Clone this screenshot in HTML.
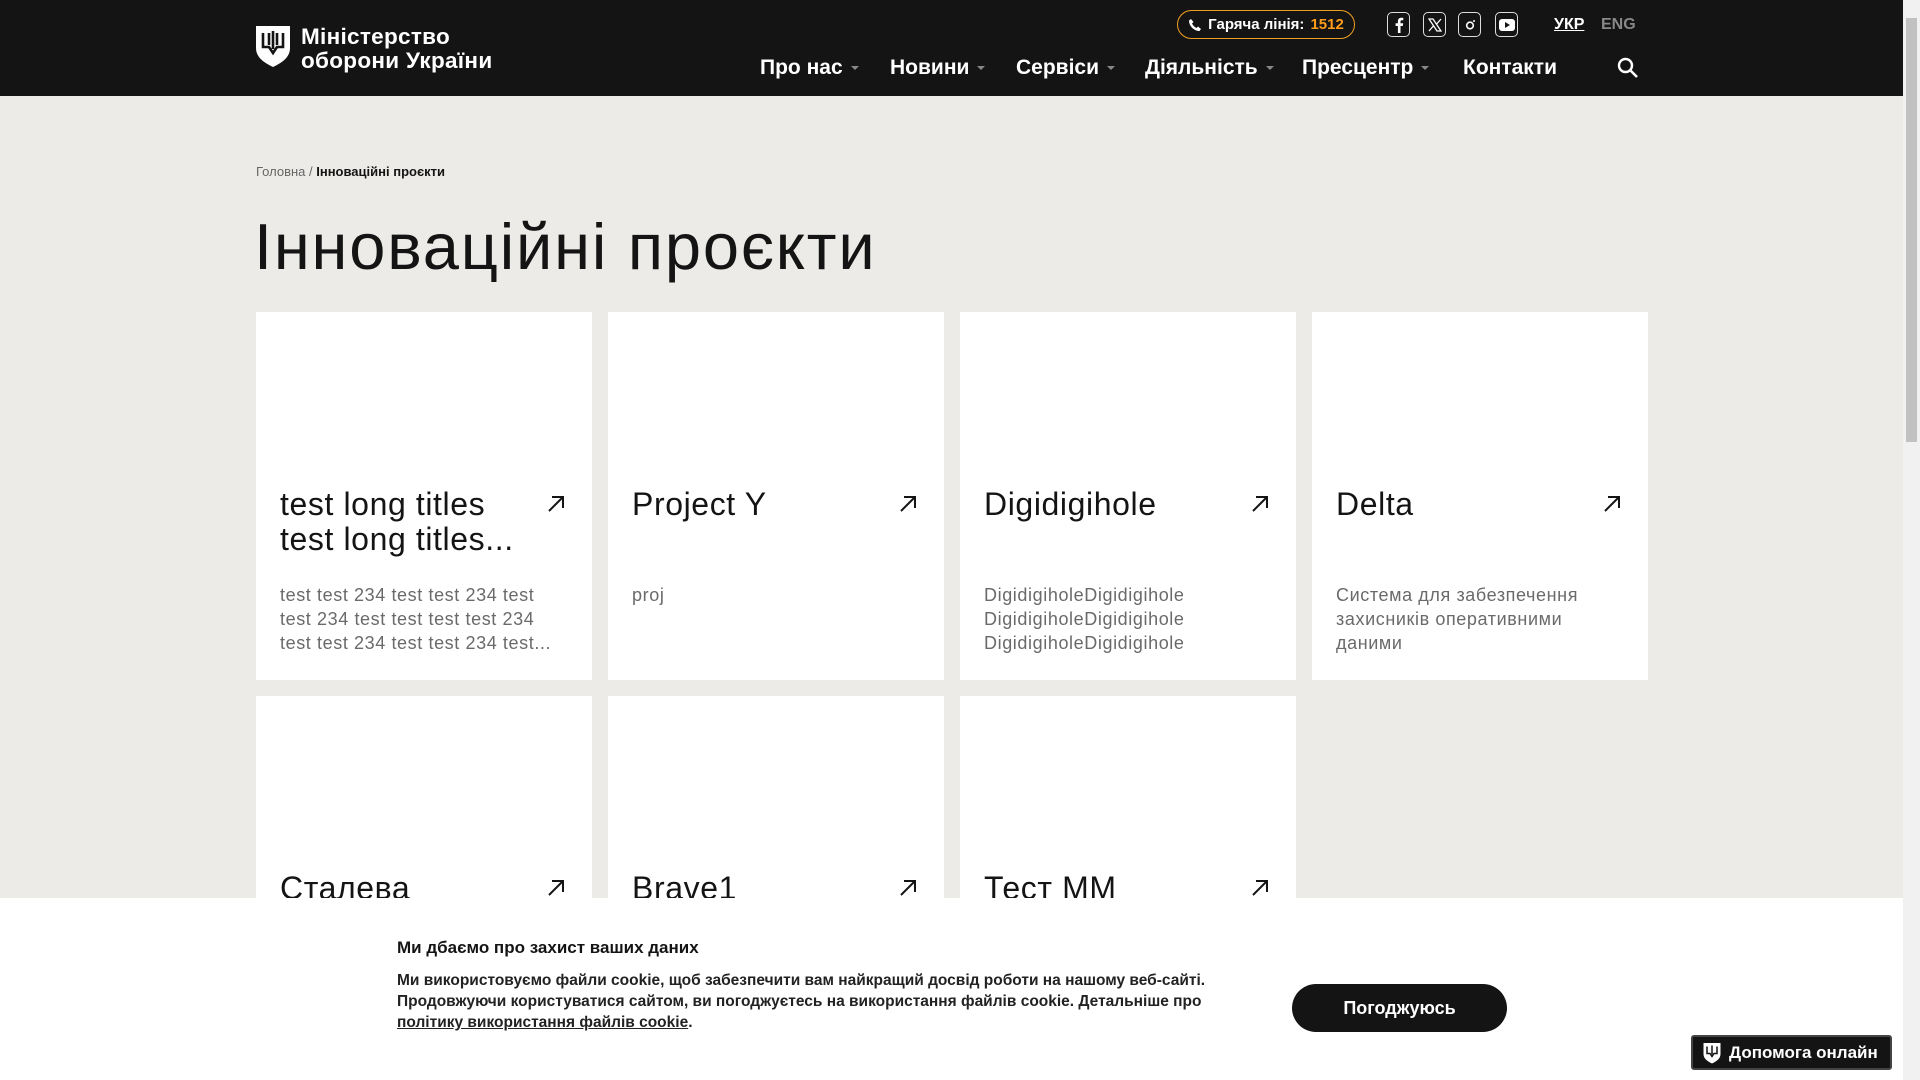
<!DOCTYPE html>
<html><head><meta charset="utf-8">
<style>
*{box-sizing:border-box;margin:0;padding:0}
body{width:1920px;height:1080px;overflow:hidden;background:#edebe7;font-family:"Liberation Sans",sans-serif;position:relative;color:#141414}
.hdr{position:absolute;left:0;top:0;width:1903px;height:96px;background:#141414}
.logo{position:absolute;left:255px;top:25px;display:flex;gap:10px;color:#fff;font-weight:bold;font-size:22.5px;line-height:24px;letter-spacing:0.3px}
.pill{position:absolute;left:1177px;top:10px;width:178px;height:29px;border:1.5px solid #f0a020;border-radius:15px;color:#fff;font-size:15px;font-weight:bold;display:flex;align-items:center;justify-content:center;gap:6px}
.pill b{color:#ff9d1a}
.soc{position:absolute;top:12px;width:23px;height:25px;border:1.5px solid #ddd;border-radius:5px;display:flex;align-items:center;justify-content:center}
.lang{position:absolute;top:16px;font-size:16px;font-weight:bold}
.nav{position:absolute;top:56px;font-size:21px;font-weight:bold;color:#fff}
.nav i{display:inline-block;border-left:4px solid transparent;border-right:4px solid transparent;border-top:4px solid #888;margin-left:8px;vertical-align:middle}
.sb{position:absolute;right:0;top:0;width:17px;height:1080px;background:#f1f1f1}
.sb div{position:absolute;left:3px;top:18px;width:11px;height:424px;background:#c1c1c1}
.bc{position:absolute;left:256px;top:164px;font-size:13px;color:#666}
.bc b{color:#141414}
h1{position:absolute;left:254px;top:210px;font-size:65px;font-weight:normal;line-height:74px;letter-spacing:1.8px}
.card{position:absolute;width:336px;height:368px;background:#fff}
.card h3{position:absolute;left:24px;top:175px;width:250px;font-size:32px;line-height:35px;font-weight:normal;letter-spacing:0.6px}
.card svg{position:absolute;left:290px;top:182px}
.d{position:absolute;font-size:18px;line-height:24px;color:#6a6a6a;letter-spacing:0.6px}
.ck{position:absolute;left:0;top:898px;width:1903px;height:182px;background:#fff}
.ck h4{position:absolute;left:397px;top:40px;font-size:17px;font-weight:bold}
.ck .t{position:absolute;left:397px;top:72px;font-size:15.5px;line-height:21px;font-weight:bold;color:#222}
.btn{position:absolute;left:1292px;top:86px;width:215px;height:48px;border-radius:24px;background:#141414;color:#fff;font-size:18px;font-weight:bold;display:flex;align-items:center;justify-content:center}
.help{position:absolute;left:1691px;top:1035px;width:201px;height:35px;background:#141414;border:2px solid #444;border-radius:3px;color:#fff;font-size:17px;font-weight:bold;display:flex;align-items:center;gap:8px;padding-left:10px}
</style></head><body>
<div class="hdr">
 <div class="logo"><svg width="36" height="42" viewBox="0 0 36 42"><path d="M1 1h34v22c0 10-9 15-17 19C10 38 1 33 1 23z" fill="#fff"/><path d="M8 8v14h6l4 6 4-6h6V8M14 8v12M22 8v12M18 6v18" stroke="#141414" stroke-width="2.6" fill="none"/></svg><div>Міністерство<br>оборони України</div></div>
 <div class="pill"><svg width="14" height="14" viewBox="0 0 14 14"><path d="M3 1l2.5 3-1.5 1.5c1 2 2.5 3.5 4.5 4.5L10 8.5l3 2.5-1.5 2C6 13 1 8 1 2.5z" fill="#fff"/></svg>Гаряча лінія: <b>1512</b></div>
 <div class="soc" style="left:1387px"><svg width="10" height="16" viewBox="0 0 10 16"><path d="M6.5 16V9h2.3l.4-2.7H6.5V4.6c0-.8.3-1.3 1.4-1.3h1.4V.9C9 .8 8.2.7 7.3.7 5.3.7 3.9 1.9 3.9 4.2v2.1H1.6V9h2.3v7" fill="#fff"/></svg></div>
 <div class="soc" style="left:1423px"><svg width="14" height="14" viewBox="0 0 14 14"><path d="M1 1h4l8 12H9zM13 1L8.2 6.5M1 13l4.8-5.5" stroke="#fff" stroke-width="1.3" fill="none"/></svg></div>
 <div class="soc" style="left:1458px"><svg width="14" height="14" viewBox="0 0 14 14"><circle cx="7" cy="7.5" r="3.3" stroke="#fff" stroke-width="1.6" fill="none"/><circle cx="11" cy="3" r="1" fill="#fff"/></svg></div>
 <div class="soc" style="left:1495px"><svg width="16" height="14" viewBox="0 0 16 14"><rect x="0" y="1" width="16" height="12" rx="3" fill="#fff"/><path d="M6 4v6l5-3z" fill="#141414"/></svg></div>
 <div class="lang" style="left:1554px;color:#fff;text-decoration:underline">УКР</div>
 <div class="lang" style="left:1601px;color:#888">ENG</div>
 <div class="nav" style="left:760px">Про нас<i></i></div>
 <div class="nav" style="left:890px">Новини<i></i></div>
 <div class="nav" style="left:1016px">Сервіси<i></i></div>
 <div class="nav" style="left:1145px">Діяльність<i></i></div>
 <div class="nav" style="left:1302px">Пресцентр<i></i></div>
 <div class="nav" style="left:1463px">Контакти</div>
 <svg style="position:absolute;left:1617px;top:57px" width="22" height="22" viewBox="0 0 22 22"><circle cx="8.5" cy="8.5" r="6.5" stroke="#fff" stroke-width="2.4" fill="none"/><path d="M13 13l7 7" stroke="#fff" stroke-width="2.6"/></svg>
</div>
<div class="sb"><div></div></div>
<div class="bc">Головна / <b>Інноваційні проєкти</b></div>
<h1>Інноваційні проєкти</h1>

<div class="card" style="left:256px;top:312px"><h3>test long titles test long titles...</h3><svg width="20" height="20"><path d="M3 17L17 3M6 3h11v11" stroke="#141414" stroke-width="2" fill="none"/></svg></div>
<div class="card" style="left:608px;top:312px"><h3>Project Y</h3><svg width="20" height="20"><path d="M3 17L17 3M6 3h11v11" stroke="#141414" stroke-width="2" fill="none"/></svg></div>
<div class="card" style="left:960px;top:312px"><h3>Digidigihole</h3><svg width="20" height="20"><path d="M3 17L17 3M6 3h11v11" stroke="#141414" stroke-width="2" fill="none"/></svg></div>
<div class="card" style="left:1312px;top:312px"><h3>Delta</h3><svg width="20" height="20"><path d="M3 17L17 3M6 3h11v11" stroke="#141414" stroke-width="2" fill="none"/></svg></div>
<div class="d" style="left:280px;top:583px">test test 234 test test 234 test<br>test 234 test test test test 234<br>test test 234 test test 234 test...</div>
<div class="d" style="left:632px;top:583px">proj</div>
<div class="d" style="left:984px;top:583px">DigidigiholeDigidigihole<br>DigidigiholeDigidigihole<br>DigidigiholeDigidigihole</div>
<div class="d" style="left:1336px;top:583px">Система для забезпечення<br>захисників оперативними<br>даними</div>

<div class="card" style="left:256px;top:696px"><h3>Сталева</h3><svg width="20" height="20"><path d="M3 17L17 3M6 3h11v11" stroke="#141414" stroke-width="2" fill="none"/></svg></div>
<div class="card" style="left:608px;top:696px"><h3>Brave1</h3><svg width="20" height="20"><path d="M3 17L17 3M6 3h11v11" stroke="#141414" stroke-width="2" fill="none"/></svg></div>
<div class="card" style="left:960px;top:696px"><h3>Тест ММ</h3><svg width="20" height="20"><path d="M3 17L17 3M6 3h11v11" stroke="#141414" stroke-width="2" fill="none"/></svg></div>

<div class="ck">
 <h4>Ми дбаємо про захист ваших даних</h4>
 <div class="t">Ми використовуємо файли cookie, щоб забезпечити вам найкращий досвід роботи на нашому веб-сайті.<br>Продовжуючи користуватися сайтом, ви погоджуєтесь на використання файлів cookie. Детальніше про<br><u>політику використання файлів cookie</u>.</div>
 <div class="btn">Погоджуюсь</div>
</div>
<div class="help"><svg width="18" height="22" viewBox="0 0 36 42"><path d="M1 1h34v22c0 10-9 15-17 19C10 38 1 33 1 23z" fill="#fff"/><path d="M8 8v14h6l4 6 4-6h6V8M18 6v18" stroke="#141414" stroke-width="3" fill="none"/></svg>Допомога онлайн</div>
</body></html>
